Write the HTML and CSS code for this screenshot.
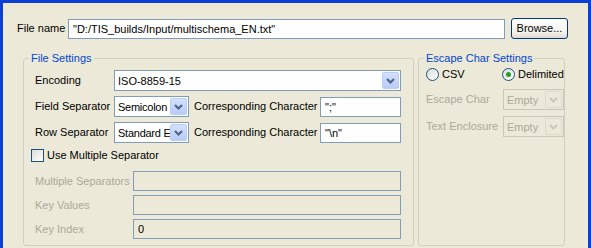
FILE: index.html
```html
<!DOCTYPE html>
<html lang="en">
<head>
  <link rel="stylesheet" href="styles.css">
</head>
<body>
  <div class="window">
    <div class="file-row">
      <div class="label file-label">File name</div>
      <div class="textbox file-box">"D:/TIS_builds/Input/multischema_EN.txt"</div>
      <div class="button">Browse...</div>
    </div>

    <div class="groups">
      <fieldset class="group file-settings">
        <legend>File Settings</legend>
        <div class="group-body">
          <div class="row">
            <div class="label enc-label">Encoding</div>
            <div class="combo enc-combo">
              <span class="combo-text">ISO-8859-15</span>
              <span class="drop"><svg width="9" height="6" viewBox="0 0 9 6"><path d="M1 1 L4.5 4.5 L8 1" fill="none" stroke="#4d6185" stroke-width="2"/></svg></span>
            </div>
          </div>
          <div class="row sep-row">
            <div class="label enc-label">Field Separator</div>
            <div class="combo sep-combo">
              <span class="combo-text">Semicolon</span>
              <span class="drop"><svg width="9" height="6" viewBox="0 0 9 6"><path d="M1 1 L4.5 4.5 L8 1" fill="none" stroke="#4d6185" stroke-width="2"/></svg></span>
            </div>
            <div class="label corr-label">Corresponding Character</div>
            <div class="textbox corr-box">";"</div>
          </div>
          <div class="row sep-row">
            <div class="label enc-label">Row Separator</div>
            <div class="combo sep-combo">
              <span class="combo-text">Standard EOL</span>
              <span class="drop"><svg width="9" height="6" viewBox="0 0 9 6"><path d="M1 1 L4.5 4.5 L8 1" fill="none" stroke="#4d6185" stroke-width="2"/></svg></span>
            </div>
            <div class="label corr-label">Corresponding Character</div>
            <div class="textbox corr-box">"\n"</div>
          </div>
          <div class="check-row">
            <span class="checkbox"></span>
            <span class="label">Use Multiple Separator</span>
          </div>
          <div class="row multi-row">
            <div class="label disabled multi-label">Multiple Separators</div>
            <div class="textbox disabled-box multi-box"></div>
          </div>
          <div class="row multi-row">
            <div class="label disabled multi-label">Key Values</div>
            <div class="textbox disabled-box multi-box"></div>
          </div>
          <div class="row multi-row">
            <div class="label disabled multi-label">Key Index</div>
            <div class="textbox disabled-box multi-box">0</div>
          </div>
        </div>
      </fieldset>

      <fieldset class="group escape-settings">
        <legend>Escape Char Settings</legend>
        <div class="group-body escape-body">
          <div class="radio-row">
            <div class="radio-item csv-item">
              <span class="radio"></span>
              <span class="label">CSV</span>
            </div>
            <div class="radio-item">
              <span class="radio checked"><span class="dot"></span></span>
              <span class="label">Delimited</span>
            </div>
          </div>
          <div class="row esc-row">
            <div class="label disabled esc-label">Escape Char</div>
            <div class="combo combo-disabled esc-combo">
              <span class="combo-text">Empty</span>
              <span class="drop"><svg width="9" height="6" viewBox="0 0 9 6"><path d="M1 1 L4.5 4.5 L8 1" fill="none" stroke="#c9c7ba" stroke-width="2"/></svg></span>
            </div>
          </div>
          <div class="row esc-row">
            <div class="label disabled esc-label">Text Enclosure</div>
            <div class="combo combo-disabled esc-combo">
              <span class="combo-text">Empty</span>
              <span class="drop"><svg width="9" height="6" viewBox="0 0 9 6"><path d="M1 1 L4.5 4.5 L8 1" fill="none" stroke="#c9c7ba" stroke-width="2"/></svg></span>
            </div>
          </div>
        </div>
      </fieldset>
    </div>
  </div>
</body>
</html>
```

FILE: styles.css
```css
body {
    margin: 0;
    padding: 0;
    background: #ece9d8;
    font-family: "Liberation Sans", Arial, sans-serif;
    font-size: 11px;
    color: #000;
}
.window {
    width: 591px;
    height: 248px;
    box-sizing: border-box;
    border-style: solid;
    border-color: #0a3fd8;
    border-width: 3px 3px 0 3px;
    background: #ece9d8;
    display: flex;
    flex-direction: column;
}
.label {
    white-space: nowrap;
    line-height: 13px;
}
.disabled {
    color: #aca899;
}

/* file name row */
.file-row {
    display: flex;
    align-items: center;
    height: 21px;
    margin-top: 15px;
    padding-left: 14px;
}
.file-label {
    width: 51px;
}
.textbox {
    box-sizing: border-box;
    height: 20px;
    border: 1px solid #7f9db9;
    background: #fff;
    padding: 0 4px;
    line-height: 18px;
    white-space: nowrap;
    overflow: hidden;
}
.file-box {
    width: 437px;
}
.button {
    box-sizing: border-box;
    width: 57px;
    height: 21px;
    margin-left: 6px;
    border: 1px solid #003c74;
    border-radius: 3px;
    background: linear-gradient(#ffffff, #f3f2ec 70%, #dcdad0);
    line-height: 19px;
    text-align: center;
}

/* groups */
.groups {
    display: flex;
    flex: 1;
    margin: 13px 0 2px 20px;
    gap: 4px;
}
.group {
    margin: 0;
    padding: 0;
    border: 1px solid #d0d0bf;
    border-radius: 3px;
    box-sizing: border-box;
    min-width: 0;
}
.group legend {
    margin-left: 5px;
    padding: 0 2px;
    color: #0046d5;
    line-height: 13px;
}
.file-settings {
    width: 391px;
}
.escape-settings {
    width: 147px;
}
.group-body {
    padding: 5px 0 0 11px;
}
.row {
    display: flex;
    align-items: center;
}
.enc-label {
    width: 79px;
}
.combo {
    box-sizing: border-box;
    height: 21px;
    border: 1px solid #7f9db9;
    background: #fff;
    display: flex;
    align-items: center;
    padding: 1px;
    overflow: hidden;
}
.combo-text {
    flex: 1;
    min-width: 0;
    padding-left: 2px;
    white-space: nowrap;
    overflow: hidden;
}
.drop {
    box-sizing: border-box;
    flex: none;
    width: 17px;
    height: 17px;
    border: 1px solid #b9cdf8;
    border-radius: 2px;
    background: linear-gradient(#d3e0fd, #b8cbf9);
    display: flex;
    align-items: center;
    justify-content: center;
}
.enc-combo {
    width: 287px;
}
.sep-row {
    margin-top: 5px;
}
.sep-combo {
    width: 75px;
}
.sep-combo .combo-text {
    letter-spacing: -0.25px;
}
.corr-label {
    margin-left: 5px;
    width: 126px;
}
.corr-box {
    width: 81px;
}
.check-row {
    display: flex;
    align-items: center;
    margin: 6px 0 0 -4px;
    height: 13px;
}
.checkbox {
    box-sizing: border-box;
    width: 13px;
    height: 13px;
    border: 1px solid #1c5180;
    background: linear-gradient(135deg, #dcdcd7, #ffffff);
    margin-right: 3px;
}
.multi-row {
    margin-top: 9px;
}
.multi-row + .multi-row {
    margin-top: 4px;
}
.multi-label {
    width: 98px;
}
.disabled-box {
    background: #ece9d8;
}
.multi-box {
    width: 268px;
}

/* escape char settings */
.escape-body {
    padding: 3px 0 0 7px;
}
.radio-row {
    display: flex;
    align-items: center;
    height: 13px;
}
.radio-item {
    display: flex;
    align-items: center;
}
.csv-item {
    width: 76px;
}
.radio {
    box-sizing: border-box;
    width: 13px;
    height: 13px;
    border: 1px solid #1c5180;
    border-radius: 50%;
    background: linear-gradient(135deg, #dcdcd7, #ffffff);
    margin-right: 3px;
    display: flex;
    align-items: center;
    justify-content: center;
}
.dot {
    width: 5px;
    height: 5px;
    border-radius: 50%;
    background: #21a121;
}
.esc-row {
    margin-top: 8px;
}
.esc-row + .esc-row {
    margin-top: 6px;
}
.esc-label {
    width: 77px;
}
.combo-disabled {
    border-color: #c9c7ba;
    background: #ece9d8;
    color: #aca899;
}
.combo-disabled .drop {
    border-color: #dcdad0;
    background: #ece9d8;
}
.esc-combo {
    width: 61px;
}
```
